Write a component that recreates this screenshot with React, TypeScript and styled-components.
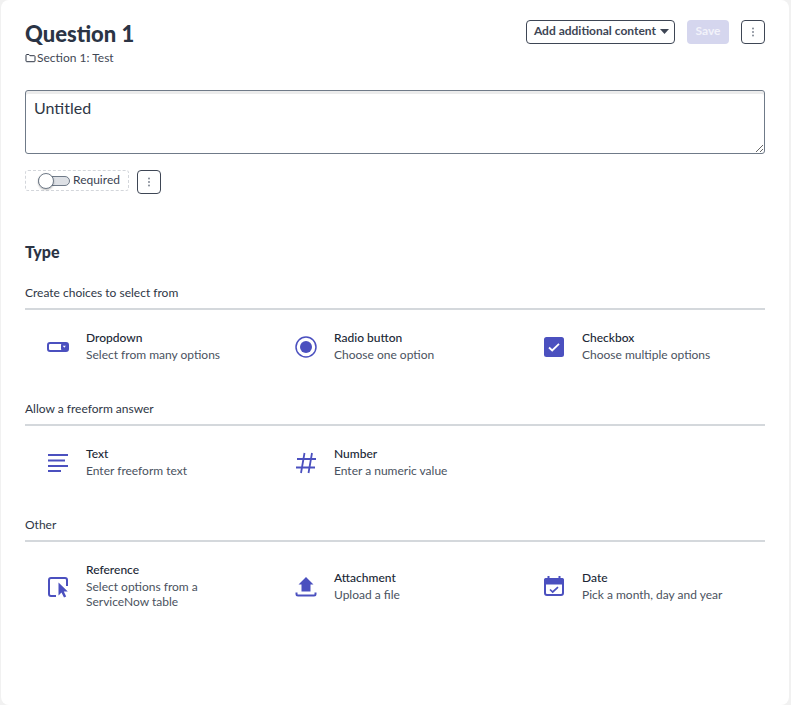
import React from "react";
import styled, { createGlobalStyle } from "styled-components";

const Global = createGlobalStyle`
  html, body { margin: 0; padding: 0; background: #f1f1f1; }
  body { font-family: Lato, "Liberation Sans", sans-serif; color: #2e3645; -webkit-font-smoothing: antialiased; }
  * { box-sizing: border-box; }
`;

const Panel = styled.main`
  width: 788px;
  height: 705px;
  margin-left: 1px;
  background: #fff;
  border-radius: 8px;
  padding: 17px 24px 0;
`;

const Header = styled.header`
  display: flex;
  justify-content: space-between;
  align-items: flex-start;
  height: 73px;
`;

const Title = styled.h1`
  margin: 0;
  font-size: 22px;
  line-height: 34px;
  font-weight: 900;
  color: #2b3445;
`;

const Crumb = styled.div`
  display: flex;
  align-items: center;
  height: 14px;
  font-size: 12px;
  line-height: 14px;
  color: #3f4755;
`;

const FolderSlot = styled.span`
  display: flex;
  margin-right: 1px;
`;

const Actions = styled.div`
  display: flex;
  align-items: center;
  gap: 12px;
  padding-top: 3px;
`;

const OutlineButton = styled.button`
  height: 24px;
  border: 1px solid #3e4655;
  border-radius: 4px;
  background: #fff;
  padding: 0 5px 2px 7px;
  display: inline-flex;
  align-items: center;
  justify-content: center;
  gap: 4px;
  font: 700 12px/14px Lato, sans-serif;
  color: #3e4655;
`;

const KebabButton = styled(OutlineButton)`
  width: 24px;
  padding: 0;
`;

const SaveButton = styled.button`
  width: 42px;
  height: 24px;
  border: 0;
  border-radius: 4px;
  background: #d5d6ee;
  color: #f2f2fa;
  padding: 0 0 2px;
  font: 700 12px/14px Lato, sans-serif;
`;

const Question = styled.textarea`
  display: block;
  width: 100%;
  height: 64px;
  border: 1px solid #6f7a88;
  border-radius: 3px;
  box-shadow: inset 0 3px 0 #ececec;
  padding: 7px 8px;
  font: 400 16px/20px Lato, sans-serif;
  color: #2e3645;
  outline: none;
  resize: vertical;
`;

const RequiredRow = styled.div`
  display: flex;
  align-items: flex-start;
  gap: 8px;
  margin-top: 16px;
`;

const RequiredBox = styled.div`
  width: 104px;
  height: 21px;
  border: 1px dashed #d3d6db;
  border-radius: 3px;
  display: flex;
  align-items: center;
  padding: 0 0 2px 12px;
  gap: 3px;
  font-size: 12px;
  color: #3a4252;
`;

const Track = styled.span`
  position: relative;
  width: 32px;
  height: 10px;
  top: 1px;
  border: 1px solid #6f7a88;
  border-radius: 5px;
  background: #dde0e5;
  flex: none;
`;

const Knob = styled.span`
  position: absolute;
  left: -1px;
  top: -4px;
  width: 16px;
  height: 16px;
  border-radius: 50%;
  background: #fff;
  border: 1px solid #6f7a88;
  box-shadow: 0 1px 2px rgba(0, 0, 0, 0.25);
`;

const TypeHeading = styled.h2`
  margin: 48px 0 0;
  font-size: 16px;
  line-height: 20px;
  font-weight: 900;
  color: #2b3445;
`;

const GroupLabel = styled.div`
  font-size: 12px;
  line-height: 15px;
  color: #2e3645;
  padding-bottom: 8px;
  border-bottom: 2px solid #d4d8dc;
`;

const Group = styled.section<{ $top: number }>`
  margin-top: ${(p) => p.$top}px;
`;

const Options = styled.div<{ $height: number }>`
  display: grid;
  grid-template-columns: 248px 248px 1fr;
  align-items: center;
  height: ${(p) => p.$height}px;
`;

const Option = styled.div`
  display: flex;
  align-items: center;
  padding-left: 20px;
`;

const IconSlot = styled.span`
  width: 26px;
  height: 26px;
  margin-right: 15px;
  display: flex;
  align-items: center;
  justify-content: center;
  flex: none;
  color: #4b50bf;
`;

const OptionCopy = styled.div<{ $tall?: boolean }>`
  padding-bottom: ${(p) => (p.$tall ? 3 : 2)}px;
`;

const OptionTitle = styled.div`
  font-size: 12px;
  line-height: 15px;
  font-weight: 500;
  color: #202735;
  margin-bottom: 2px;
`;

const OptionText = styled.div`
  font-size: 12px;
  line-height: 15px;
  color: #4a5260;
`;

const Folder = () => (
  <svg width="11" height="10" viewBox="0 0 11 10" fill="none" stroke="#2e3645" strokeWidth="1">
    <path d="M1 8V2.200c0-.4.3-.7.7-.7h2.200l1 1.200h4.400c.4 0 .7.3.7.7V8c0 .4-.3.7-.7.7H1.700C1.300 8.700 1 8.400 1 8Z" />
  </svg>
);

const Dots = () => (
  <svg width="4" height="10" viewBox="0 0 4 10" fill="#757d8a">
    <circle cx="2" cy="1.500" r="0.900" />
    <circle cx="2" cy="5" r="0.900" />
    <circle cx="2" cy="8.500" r="0.900" />
  </svg>
);

const Caret = () => (
  <svg width="9" height="5" viewBox="0 0 9 5" fill="#3e4655">
    <path d="M0 0h9L4.500 5Z" />
  </svg>
);

const DropdownIcon = () => (
  <svg width="24" height="24" viewBox="0 0 24 24">
    <rect x="2" y="8" width="20" height="8" rx="2" fill="none" stroke="currentColor" strokeWidth="2" />
    <rect x="15" y="8" width="7" height="8" rx="2" fill="currentColor" />
    <path d="M16.800 10.800h3l-1.500 2Z" fill="#fff" />
  </svg>
);

const RadioIcon = () => (
  <svg width="24" height="24" viewBox="0 0 24 24">
    <circle cx="12" cy="12" r="10" fill="none" stroke="currentColor" strokeWidth="1.500" />
    <circle cx="12" cy="12" r="6" fill="currentColor" />
  </svg>
);

const CheckIcon = () => (
  <svg width="24" height="24" viewBox="0 0 24 24">
    <rect x="2" y="2" width="20" height="20" rx="2.500" fill="currentColor" />
    <path d="M7 12.500l3.200 3L17 8.800" fill="none" stroke="#fff" strokeWidth="1.800" />
  </svg>
);

const TextIcon = () => (
  <svg width="24" height="24" viewBox="0 0 24 24" stroke="currentColor" strokeWidth="1.800">
    <path d="M2 4h20M2 9.500h17M2 15h20M2 20h13" />
  </svg>
);

const HashIcon = () => (
  <svg width="24" height="24" viewBox="0 0 24 24" fill="none" stroke="currentColor" strokeWidth="1.800">
    <path d="M3 8h19M2 16.500h19M10.500 2 7 22M18 2 14.500 22" />
  </svg>
);

const ReferenceIcon = () => (
  <svg width="24" height="24" viewBox="0 0 24 24">
    <path d="M10 21H5a2 2 0 0 1-2-2V5a2 2 0 0 1 2-2h14a2 2 0 0 1 2 2v6" fill="none" stroke="currentColor" strokeWidth="2" />
    <path d="M12.500 7.500V20.500l3-3 2.500 5 2.200-1.100-2.400-4.800h4Z" fill="currentColor" />
  </svg>
);

const UploadIcon = () => (
  <svg width="24" height="24" viewBox="0 0 24 24">
    <path d="M12 2l7.500 7.500H16.500v7h-9v-7H4.500Z" fill="currentColor" />
    <path d="M2.500 17.500v1.500a1.500 1.500 0 0 0 1.500 1.500h16a1.500 1.500 0 0 0 1.500-1.500v-1.500" fill="none" stroke="currentColor" strokeWidth="2" />
  </svg>
);

const DateIcon = () => (
  <svg width="24" height="24" viewBox="0 0 24 24">
    <rect x="3" y="4" width="18" height="16" rx="2" fill="none" stroke="currentColor" strokeWidth="2" />
    <path d="M2 5a2 2 0 0 1 2-2h16a2 2 0 0 1 2 2v4.500H2Z" fill="currentColor" />
    <path d="M6.500 1v3M17.500 1v3" stroke="currentColor" strokeWidth="2" />
    <path d="M8 14.500l2.700 2.500L16 12.200" fill="none" stroke="currentColor" strokeWidth="1.700" />
  </svg>
);

type Item = { icon: React.ReactNode; title: string; text: React.ReactNode; tall?: boolean };

const groups: { label: string; top: number; height: number; items: Item[] }[] = [
  {
    label: "Create choices to select from",
    top: 23,
    height: 74,
    items: [
      { icon: <DropdownIcon />, title: "Dropdown", text: "Select from many options" },
      { icon: <RadioIcon />, title: "Radio button", text: "Choose one option" },
      { icon: <CheckIcon />, title: "Checkbox", text: "Choose multiple options" },
    ],
  },
  {
    label: "Allow a freeform answer",
    top: 17,
    height: 74,
    items: [
      { icon: <TextIcon />, title: "Text", text: "Enter freeform text" },
      { icon: <HashIcon />, title: "Number", text: "Enter a numeric value" },
    ],
  },
  {
    label: "Other",
    top: 17,
    height: 90,
    items: [
      {
        icon: <ReferenceIcon />,
        title: "Reference",
        tall: true,
        text: (
          <>
            Select options from a
            <br />
            ServiceNow table
          </>
        ),
      },
      { icon: <UploadIcon />, title: "Attachment", text: "Upload a file" },
      { icon: <DateIcon />, title: "Date", text: "Pick a month, day and year" },
    ],
  },
];

export default function App() {
  return (
    <>
      <Global />
      <Panel>
        <Header>
          <div>
            <Title>Question 1</Title>
            <Crumb>
              <FolderSlot>
                <Folder />
              </FolderSlot>
              Section 1: Test
            </Crumb>
          </div>
          <Actions>
            <OutlineButton>
              Add additional content <Caret />
            </OutlineButton>
            <SaveButton>Save</SaveButton>
            <KebabButton aria-label="More">
              <Dots />
            </KebabButton>
          </Actions>
        </Header>
        <Question defaultValue="Untitled" />
        <RequiredRow>
          <RequiredBox>
            <Track>
              <Knob />
            </Track>
            Required
          </RequiredBox>
          <KebabButton aria-label="More options">
            <Dots />
          </KebabButton>
        </RequiredRow>
        <TypeHeading>Type</TypeHeading>
        {groups.map((g) => (
          <Group key={g.label} $top={g.top}>
            <GroupLabel>{g.label}</GroupLabel>
            <Options $height={g.height}>
              {g.items.map((it) => (
                <Option key={it.title}>
                  <IconSlot>{it.icon}</IconSlot>
                  <OptionCopy $tall={it.tall}>
                    <OptionTitle>{it.title}</OptionTitle>
                    <OptionText>{it.text}</OptionText>
                  </OptionCopy>
                </Option>
              ))}
            </Options>
          </Group>
        ))}
      </Panel>
    </>
  );
}
